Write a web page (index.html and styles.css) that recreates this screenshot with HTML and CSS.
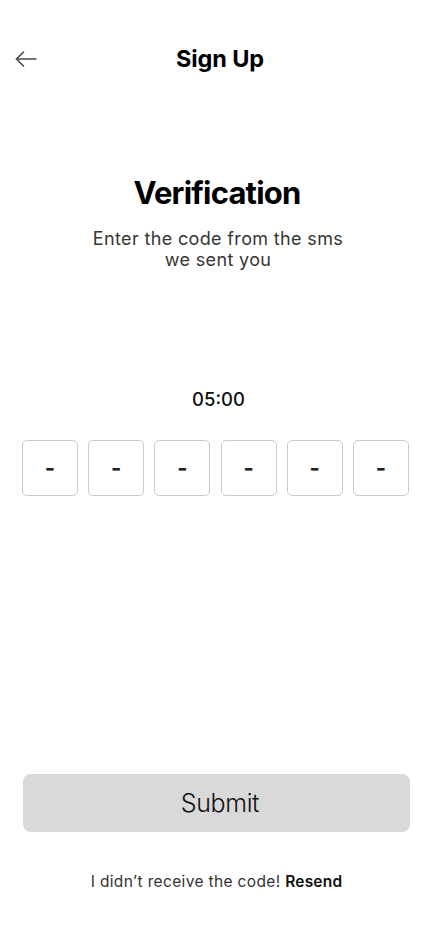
FILE: index.html
```html
<!DOCTYPE html>
<html lang="en">
<head>
<meta charset="utf-8">
<meta name="viewport" content="width=device-width, initial-scale=1">
<title>Sign Up - Verification</title>
<link rel="stylesheet" href="styles.css">
</head>
<body>
<div class="screen">
  <header class="topbar">
    <button class="back" aria-label="Back">
      <svg width="24" height="18" viewBox="0 0 24 18" fill="none" stroke="#4a4a4a" stroke-width="1.6" stroke-linecap="round" stroke-linejoin="round">
        <path d="M22 9H2.5"/>
        <path d="M9.5 2L2.5 9l7 7"/>
      </svg>
    </button>
    <h1 class="title">Sign Up</h1>
    <span class="spacer"></span>
  </header>

  <section class="intro">
    <h2 class="heading">Verification</h2>
    <p class="sub">Enter the code from the sms<br>we sent you</p>
  </section>

  <div class="timer">05:00</div>

  <div class="code">
    <div class="cell">-</div>
    <div class="cell">-</div>
    <div class="cell">-</div>
    <div class="cell">-</div>
    <div class="cell">-</div>
    <div class="cell">-</div>
  </div>

  <div class="grow"></div>

  <button class="submit">Submit</button>

  <p class="resend">I didn’t receive the code! <b>Resend</b></p>
</div>
</body>
</html>
```

FILE: styles.css
```css
* { box-sizing: border-box; }
html, body { margin: 0; padding: 0; background: #fff; }
body {
  font-family: Inter, "Noto Sans", sans-serif;
  color: #111;
}
.screen {
  width: 428px;
  height: 926px;
  display: flex;
  flex-direction: column;
  align-items: stretch;
}
.topbar {
  display: flex;
  align-items: center;
  height: 40px;
  margin-top: 39px;
  padding: 0 12px 0 14px;
}
.back {
  background: none;
  border: 0;
  padding: 0;
  width: 24px;
  height: 18px;
  display: flex;
  flex: none;
}
.title {
  flex: 1;
  margin: 0 0 2px;
  text-align: center;
  font-size: 23.5px;
  font-weight: 700;
  letter-spacing: -0.1px;
  color: #000;
}
.spacer { width: 14px; flex: none; }
.intro {
  display: flex;
  flex-direction: column;
  align-items: center;
  margin-top: 96px;
  padding-left: 6px;
}
.heading {
  margin: 0;
  font-size: 31px;
  font-weight: 700;
  line-height: 36px;
  letter-spacing: -0.8px;
  color: #000;
}
.sub {
  margin: 16.7px 0 0;
  padding-left: 2px;
  font-size: 18px;
  line-height: 21px;
  letter-spacing: 0.35px;
  color: #363636;
  text-align: center;
  font-weight: 400;
}
.timer {
  margin-top: 118.6px;
  padding-left: 9px;
  text-align: center;
  font-size: 18.5px;
  font-weight: 500;
  line-height: 22px;
  color: #111;
}
.code {
  display: grid;
  grid-template-columns: repeat(6, 56px);
  gap: 10.2px;
  justify-content: start;
  padding-left: 22px;
  margin-top: 29.7px;
}
.cell {
  height: 56px;
  border: 1px solid #cbcbcb;
  border-radius: 5px;
  display: flex;
  align-items: center;
  justify-content: center;
  font-size: 22px;
  font-weight: 700;
  line-height: 1;
  color: #222;
}
.grow { flex: 1; }
.submit {
  align-self: flex-start;
  margin-left: 23px;
  width: 387px;
  height: 58px;
  border: 0;
  border-radius: 8px;
  background: #d9d9d9;
  font-family: inherit;
  font-size: 25px;
  font-weight: 300;
  letter-spacing: -0.4px;
  color: #111;
  padding: 0 0 0 7px;
}
.resend {
  margin: 40px 0 34px;
  padding-left: 5px;
  text-align: center;
  font-size: 15.5px;
  line-height: 20px;
  letter-spacing: 0.35px;
  color: #333;
  font-weight: 400;
}
.resend b { font-weight: 600; color: #111; letter-spacing: 0.2px; }
```
